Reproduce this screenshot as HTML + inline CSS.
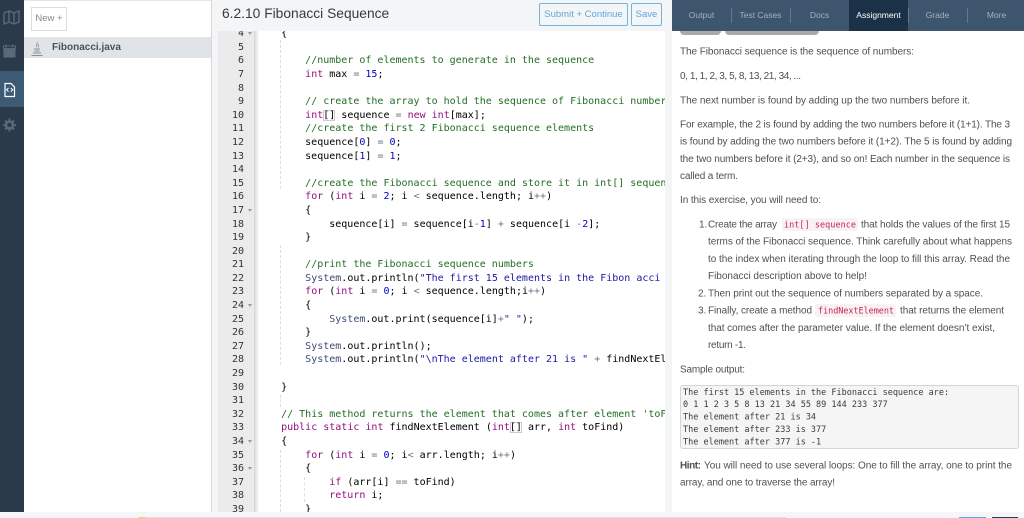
<!DOCTYPE html>
<html><head><meta charset="utf-8">
<style>
html,body{margin:0;padding:0;background:#fff}
body{width:1024px;height:518px;overflow:hidden;position:relative;font-family:"Liberation Sans",sans-serif}
.a{position:absolute}
.k{color:#930f80}.c{color:#236e24}.n{color:#0000cd}.s{color:#1a1aa6}.o{color:#687687}.f{color:#3c4c72}
.b{box-shadow:inset 0 0 0 1px #ccc}
.code,.nums{font:10px/13.6px "DejaVu Sans Mono",monospace;white-space:pre;margin:0}
.g{position:absolute;width:0;border-left:1px dashed #ddd}
.tab{position:absolute;top:0;height:31px;line-height:30px;font-size:8.5px;color:#a4b0bc;text-align:center;width:59px}
.sep{position:absolute;top:8px;height:15px;width:1px;background:#62788d}
.fold{position:absolute;left:248px;width:0;height:0;border-left:2px solid transparent;border-right:2px solid transparent;border-top:3px solid #999}
svg text{font-family:"Liberation Sans",sans-serif;font-size:10px;fill:#505050}
svg text.m{font-family:"DejaVu Sans Mono",monospace;font-size:8.5px;fill:#3a3a3a}
svg text.r{font-family:"DejaVu Sans Mono",monospace;font-size:8.5px;fill:#c7254e}
</style></head><body>

<!-- sidebar -->
<div class="a" style="left:0;top:0;width:24px;height:512px;background:#2b3a4a"></div>
<div class="a" style="left:0;top:71px;width:24px;height:36px;background:#3d5a75"></div>
<svg class="a" style="left:0;top:0" width="24" height="140" viewBox="0 0 24 140">
<path d="M4 13l5-2 5 2 5-2v11l-5 2-5-2-5 2zM9 11v11M14 13v11" fill="none" stroke="#5a6977" stroke-width="1.4"/>
<rect x="3.500" y="48" width="12" height="9.500" fill="#5a6977"/><rect x="3.500" y="46" width="12" height="2.500" fill="none" stroke="#5a6977"/>
<path d="M6 44.500v3M13 44.500v3" stroke="#5a6977" stroke-width="1.200"/>
<path d="M5 83.500h6l3.500 3.500v9.500h-9.500z" fill="none" stroke="#fff" stroke-width="1.200"/>
<path d="M8.500 88l-2 1.800 2 1.800M10.800 88l2 1.800-2 1.800" fill="none" stroke="#fff" stroke-width="1"/>
<circle cx="9.500" cy="125" r="3.500" fill="none" stroke="#5a6977" stroke-width="2.600"/>
<path d="M9.500 118.500v2.500M9.500 129v2.500M3 125h2.500M13.500 125h2.500M5 120.500l1.800 1.800M12.200 127.700l1.800 1.800M14 120.500l-1.800 1.800M6.800 127.700l-1.800 1.800" stroke="#5a6977" stroke-width="1.800"/>
</svg>

<!-- file panel -->
<div class="a" style="left:24px;top:0;width:188px;height:1px;background:#e6e6e6"></div>
<div class="a" style="left:31px;top:7px;width:34px;height:22px;border:1px solid #ddd;color:#888;font-size:9.500px;line-height:22px;text-align:center;box-sizing:content-box">New +</div>
<div class="a" style="left:24px;top:37px;width:187px;height:21px;background:#e0e4e8"></div>
<div class="a" style="left:52px;top:41px;font-size:10px;line-height:14px;font-weight:bold;color:#4d5359">Fibonacci.java</div>
<svg class="a" style="left:30px;top:41px" width="14" height="16" viewBox="0 0 14 16">
<path d="M7 1c1 2-1.500 3 0 5M8.500 3c0 1.500-1 2 0 3.500" fill="none" stroke="#8a8f94" stroke-width=".8"/>
<path d="M4 8h6M4.500 10h5M3 12h8M1.500 14.500h11" stroke="#8a8f94" stroke-width=".9"/>
</svg>

<!-- editor panel -->
<div class="a" style="left:211px;top:0;width:461px;height:512px;background:#f4f5f6;border-left:1px solid #d8d8d8;box-sizing:border-box"></div>
<div class="a" style="left:222px;top:4px;font-size:13.800px;line-height:19px;color:#3a3a3a;white-space:nowrap">6.2.10 Fibonacci Sequence</div>
<div class="a" style="left:539px;top:3px;width:87px;height:21px;border:1px solid #74b3e0;border-radius:2px;color:#5ea6dc;font-size:9.500px;line-height:22px;text-align:center;white-space:nowrap">Submit + Continue</div>
<div class="a" style="left:631px;top:3px;width:29px;height:21px;border:1px solid #74b3e0;border-radius:2px;color:#5ea6dc;font-size:9.500px;line-height:22px;text-align:center">Save</div>

<div class="a" style="left:218px;top:31px;width:447px;height:481px;background:#fff;overflow:hidden">
<div class="a" style="left:0;top:0;width:36px;height:481px;background:#ebebeb"></div>
<div class="a" style="left:36px;top:0;width:5px;height:481px;background:linear-gradient(to right,#d4d4d4,#fff)"></div>
<pre class="nums a" style="left:0;top:-3.800px;width:26px;text-align:right;color:#333">4
5
6
7
8
9
10
11
12
13
14
15
16
17
18
19
20
21
22
23
24
25
26
27
28
29
30
31
32
33
34
35
36
37
38
39</pre>
<pre class="code a" style="left:39px;top:-3.800px;color:#000">    {

        <span class="c">//number of elements to generate in the sequence</span>
        <span class="k">int</span> max <span class="o">=</span> <span class="n">15</span>;

        <span class="c">// create the array to hold the sequence of Fibonacci number</span>
        <span class="k">int</span><span class="b">[]</span> sequence <span class="o">=</span> <span class="k">new</span> <span class="k">int</span>[max];
        <span class="c">//create the first 2 Fibonacci sequence elements</span>
        sequence[<span class="n">0</span>] <span class="o">=</span> <span class="n">0</span>;
        sequence[<span class="n">1</span>] <span class="o">=</span> <span class="n">1</span>;

        <span class="c">//create the Fibonacci sequence and store it in int[] sequen</span>
        <span class="k">for</span> (<span class="k">int</span> i <span class="o">=</span> <span class="n">2</span>; i <span class="o">&lt;</span> sequence.length; i<span class="o">++</span>)
        {
            sequence[i] <span class="o">=</span> sequence[i<span class="o">-</span><span class="n">1</span>] <span class="o">+</span> sequence[i <span class="o">-</span><span class="n">2</span>];
        }

        <span class="c">//print the Fibonacci sequence numbers</span>
        <span class="f">System</span>.out.println(<span class="s">"The first 15 elements in the Fibon acci</span>
        <span class="k">for</span> (<span class="k">int</span> i <span class="o">=</span> <span class="n">0</span>; i <span class="o">&lt;</span> sequence.length;i<span class="o">++</span>)
        {
            <span class="f">System</span>.out.print(sequence[i]<span class="o">+</span><span class="s">" "</span>);
        }
        <span class="f">System</span>.out.println();
        <span class="f">System</span>.out.println(<span class="s">"\nThe element after 21 is "</span> <span class="o">+</span> findNextEl

    }

    <span class="c">// This method returns the element that comes after element 'toF</span>
    <span class="k">public</span> <span class="k">static</span> <span class="k">int</span> findNextElement (<span class="k">int</span><span class="b">[]</span> arr, <span class="k">int</span> toFind)
    {
        <span class="k">for</span> (<span class="k">int</span> i <span class="o">=</span> <span class="n">0</span>; i<span class="o">&lt;</span> arr.length; i<span class="o">++</span>)
        {
            <span class="k">if</span> (arr[i] <span class="o">==</span> toFind)
            <span class="k">return</span> i;
        }</pre>
</div>
<div class="g" style="left:280px;top:40px;height:149px"></div>
<div class="g" style="left:280px;top:245px;height:120px"></div>
<div class="g" style="left:280px;top:395px;height:12px"></div>
<div class="g" style="left:280px;top:450px;height:62px"></div>
<div class="g" style="left:304px;top:477px;height:25px"></div>
<div class="fold" style="top:32px"></div>
<div class="fold" style="top:209px"></div>
<div class="fold" style="top:304px"></div>
<div class="fold" style="top:440px"></div>
<div class="fold" style="top:467px"></div>

<!-- right panel -->
<div class="a" style="left:672px;top:0;width:352px;height:512px;background:#fff"></div>
<div class="a" style="left:672px;top:0;width:352px;height:31px;background:#3e566d"></div>
<div class="a" style="left:849px;top:0;width:59px;height:31px;background:#1b3147"></div>
<div class="tab" style="left:672px">Output</div>
<div class="tab" style="left:731px">Test Cases</div>
<div class="tab" style="left:790px">Docs</div>
<div class="tab" style="left:849px;color:#fff">Assignment</div>
<div class="tab" style="left:908px">Grade</div>
<div class="tab" style="left:967px">More</div>
<div class="sep" style="left:731px"></div><div class="sep" style="left:790px"></div><div class="sep" style="left:908px"></div><div class="sep" style="left:967px"></div>
<div class="a" style="left:680px;top:31px;width:41px;height:4px;background:#aaa;border-radius:0 0 4px 4px"></div>
<div class="a" style="left:725px;top:31px;width:94px;height:4px;background:#aaa;border-radius:0 0 4px 4px"></div>

<div class="a" style="left:782px;top:218px;width:76px;height:13px;background:#f9f2f4;border-radius:2px"></div>
<div class="a" style="left:815px;top:304px;width:81px;height:13px;background:#f9f2f4;border-radius:2px"></div>
<div class="a" style="left:680px;top:385px;width:337px;height:62px;background:#f5f5f5;border:1px solid #d5d5d5;border-radius:3px"></div>

<svg class="a" style="left:0;top:0" width="1024" height="518" viewBox="0 0 1024 518">
<text x="680" y="54.500" textLength="234">The Fibonacci sequence is the sequence of numbers:</text>
<text x="680" y="79" textLength="121">0, 1, 1, 2, 3, 5, 8, 13, 21, 34, ...</text>
<text x="680" y="103.500" textLength="290">The next number is found by adding up the two numbers before it.</text>
<text x="680" y="127.500" textLength="330">For example, the 2 is found by adding the two numbers before it (1+1). The 3</text>
<text x="680" y="144.500" textLength="332">is found by adding the two numbers before it (1+2). The 5 is found by adding</text>
<text x="680" y="162" textLength="330">the two numbers before it (2+3), and so on! Each number in the sequence is</text>
<text x="680" y="179" textLength="58">called a term.</text>
<text x="680" y="203" textLength="141">In this exercise, you will need to:</text>
<text x="699" y="227.500">1.</text>
<text x="708" y="227.500" textLength="69">Create the array</text>
<text class="r" x="784" y="227.500" textLength="72">int[] sequence</text>
<text x="861" y="227.500" textLength="149">that holds the values of the first 15</text>
<text x="708" y="244.500" textLength="304">terms of the Fibonacci sequence. Think carefully about what happens</text>
<text x="708" y="262" textLength="302">to the index when iterating through the loop to fill this array. Read the</text>
<text x="708" y="279" textLength="159">Fibonacci description above to help!</text>
<text x="698" y="296.500">2.</text>
<text x="708" y="296.500" textLength="275">Then print out the sequence of numbers separated by a space.</text>
<text x="698" y="313.500">3.</text>
<text x="708" y="313.500" textLength="104">Finally, create a method</text>
<text class="r" x="818" y="313.500" textLength="76">findNextElement</text>
<text x="900" y="313.500" textLength="104">that returns the element</text>
<text x="708" y="331" textLength="287">that comes after the parameter value. If the element doesn’t exist,</text>
<text x="708" y="348" textLength="38">return -1.</text>
<text x="680" y="372.500" textLength="65">Sample output:</text>
<text class="m" x="683" y="395">The first 15 elements in the Fibonacci sequence are:</text>
<text class="m" x="683" y="407">0 1 1 2 3 5 8 13 21 34 55 89 144 233 377</text>
<text class="m" x="683" y="419.500">The element after 21 is 34</text>
<text class="m" x="683" y="432">The element after 233 is 377</text>
<text class="m" x="683" y="444.500">The element after 377 is -1</text>
<text x="680" y="468.500" textLength="21" style="font-weight:bold">Hint:</text>
<text x="704" y="468.500" textLength="308">You will need to use several loops: One to fill the array, one to print the</text>
<text x="680" y="485.500" textLength="155">array, and one to traverse the array!</text>
</svg>

<!-- bottom strip -->
<div class="a" style="left:0;top:512px;width:1024px;height:6px;background:#f5f6f7"></div>
<div class="a" style="left:138px;top:517px;width:8px;height:1px;background:#f0d060"></div>
<div class="a" style="left:146px;top:517px;width:640px;height:1px;background:#ddd"></div>
<div class="a" style="left:959px;top:517px;width:27px;height:1px;background:#5ea6dc"></div>
<div class="a" style="left:992px;top:517px;width:26px;height:1px;background:#2b3a4a"></div>
</body></html>
